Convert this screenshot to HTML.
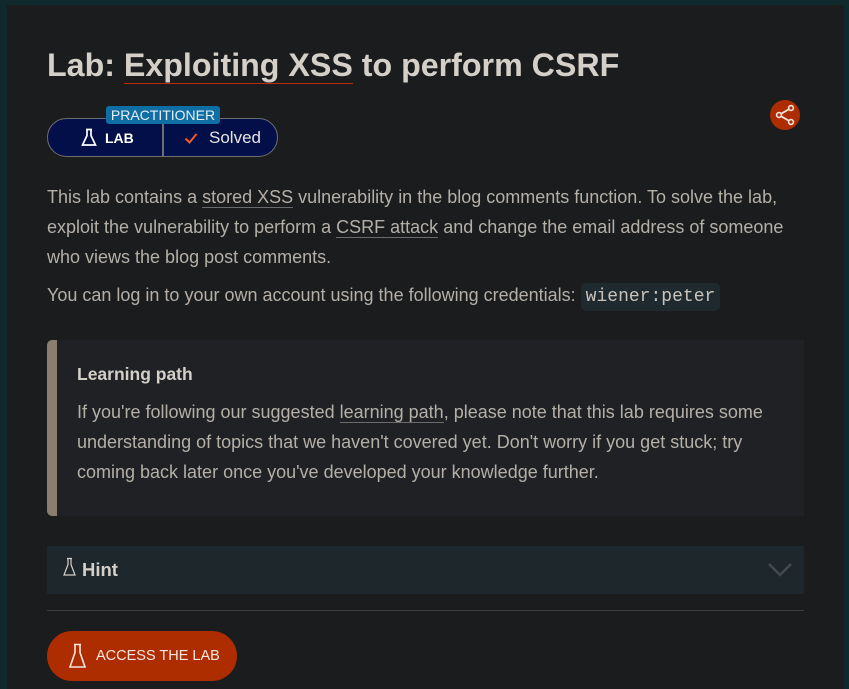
<!DOCTYPE html>
<html><head><meta charset="utf-8"><style>
*{margin:0;padding:0;box-sizing:border-box}
html,body{width:849px;height:689px;overflow:hidden}
body{background:#0f292d;font-family:"Liberation Sans",sans-serif;position:relative}
.main{position:absolute;left:7px;top:5px;width:837px;height:684px;background:#1b1c1e}
.abs{position:absolute}
h1{position:absolute;left:47px;top:47px;font-size:32.2px;font-weight:bold;color:#d4d0c9;white-space:nowrap}
h1 u{text-decoration:none;border-bottom:1.5px solid #c02a00}
p{color:#b4b0a8;font-size:18px;line-height:30px}
a{color:#b4b0a8;text-decoration:none;border-bottom:1px solid #6b6b6b}
code{font-family:"Liberation Mono",monospace;background:#1f2a2e;color:#c8c4bc;padding:4px 5px;border-radius:5px;font-size:18px}
</style></head><body>
<div class="main"></div>
<h1>Lab: <u>Exploiting XSS</u> to perform CSRF</h1>
<div class="abs" style="left:47px;top:118px;width:231px;height:39px;border:1.5px solid #6e6e6e;border-radius:20px;background:#020f48"></div>
<div class="abs" style="left:162px;top:119px;width:1.5px;height:37px;background:#6e6e6e"></div>
<div class="abs" style="left:106px;top:106px;width:114px;height:18px;background:#0f6ea3;border-radius:3px;color:#e6eef4;font-size:14px;line-height:18px;text-align:center">PRACTITIONER</div>
<svg class="abs" style="left:81px;top:128px" width="16" height="19" viewBox="0 0 16 19"><path d="M5 1.5h6M6 1.5v6L1.5 17h13L10 7.5v-6" fill="none" stroke="#fff" stroke-width="1.7"/></svg>
<div class="abs" style="left:105px;top:130px;color:#fff;font-weight:bold;font-size:14px">LAB</div>
<svg class="abs" style="left:184px;top:132px" width="14" height="12" viewBox="0 0 14 12"><path d="M1.5 6.5l4 4L12.5 2" fill="none" stroke="#f05a28" stroke-width="2"/></svg>
<div class="abs" style="left:209px;top:128px;color:#e8e6e2;font-size:17px">Solved</div>
<div class="abs" style="left:770px;top:100px;width:30px;height:30px;border-radius:50%;background:#ae2d00"></div>
<svg class="abs" style="left:770px;top:100px" width="30" height="30" viewBox="0 0 30 30"><path d="M9 15L21 8M9 15L21 22" stroke="#f2e6e0" stroke-width="1.8"/><circle cx="9" cy="15" r="2.4" fill="#ae2d00" stroke="#f2e6e0" stroke-width="1.6"/><circle cx="21" cy="8" r="2.4" fill="#ae2d00" stroke="#f2e6e0" stroke-width="1.6"/><circle cx="21" cy="22" r="2.4" fill="#ae2d00" stroke="#f2e6e0" stroke-width="1.6"/></svg>
<p class="abs" style="left:47px;top:182px;width:760px">This lab contains a <a>stored XSS</a> vulnerability in the blog comments function. To solve the lab, exploit the vulnerability to perform a <a>CSRF attack</a> and change the email address of someone who views the blog post comments.</p>
<p class="abs" style="left:47px;top:280px;white-space:nowrap">You can log in to your own account using the following credentials: <code>wiener:peter</code></p>
<div class="abs" style="left:47px;top:340px;width:757px;height:176px;background:#1f2124;border-left:10px solid #8a7e6e;border-radius:5px 0 0 5px"></div>
<div class="abs" style="left:77px;top:364px;font-size:17.5px;font-weight:bold;color:#d4d0c9">Learning path</div>
<p class="abs" style="left:77px;top:397px;width:710px">If you're following our suggested <a>learning path</a>, please note that this lab requires some understanding of topics that we haven't covered yet. Don't worry if you get stuck; try coming back later once you've developed your knowledge further.</p>
<div class="abs" style="left:47px;top:546px;width:757px;height:48px;background:#1e272c"></div>
<svg class="abs" style="left:62px;top:557px" width="16" height="20" viewBox="0 0 16 20"><path d="M5 1.5h5M6 1.5v6L2 18h11L9 7.5v-6" fill="none" stroke="#d4d0c9" stroke-width="1.2"/></svg>
<div class="abs" style="left:82px;top:559px;font-size:18.5px;font-weight:bold;color:#d4d0c9">Hint</div>
<svg class="abs" style="left:767px;top:562px" width="26" height="16" viewBox="0 0 26 16"><path d="M2 2l11 11L24 2" fill="none" stroke="#44494c" stroke-width="2.5"/></svg>
<div class="abs" style="left:47px;top:610px;width:757px;height:1px;background:#3b3d40"></div>
<div class="abs" style="left:47px;top:631px;width:190px;height:50px;background:#ae2d00;border-radius:25px"></div>
<svg class="abs" style="left:68px;top:643px" width="20" height="26" viewBox="0 0 20 26"><path d="M6 1.5h7M7 1.5v8L2 24h15L12 9.5v-8" fill="none" stroke="#f2e6e0" stroke-width="1.6"/></svg>
<div class="abs" style="left:96px;top:648px;font-size:14.5px;color:#f2e6e0">ACCESS THE LAB</div>
</body></html>
